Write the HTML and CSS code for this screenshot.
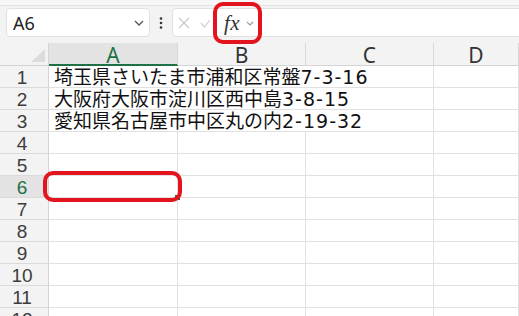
FILE: index.html
```html
<!DOCTYPE html>
<html lang="ja">
<head>
    <meta charset="UTF-8">
    <meta name="viewport" content="width=device-width, initial-scale=1.0">
    <title>Excel 住所</title>
    <link rel="stylesheet" href="styles.css">
</head>
<body>
    <div class="app">
        <div class="top-strip"></div>

        <div class="formula-bar">
            <div class="name-box">
                <span class="name-text">A6</span>
                <svg class="chevron" width="10" height="6" viewBox="0 0 10 6"><path d="M1 1 L5 5 L9 1" fill="none" stroke="#555" stroke-width="1.3"/></svg>
            </div>
            <div class="more">
                <svg width="4" height="12" viewBox="0 0 4 12"><circle cx="2" cy="1.5" r="1.3" fill="#333"/><circle cx="2" cy="6" r="1.3" fill="#333"/><circle cx="2" cy="10.5" r="1.3" fill="#333"/></svg>
            </div>
            <div class="formula-box">
                <svg class="icon" width="12" height="12" viewBox="0 0 12 12"><path d="M1 1 L11 11 M11 1 L1 11" stroke="#c8c8c8" stroke-width="1.2" fill="none"/></svg>
                <svg class="icon check" width="11" height="9" viewBox="0 0 11 9"><path d="M1 4 L4.5 8 L10 1" stroke="#cfcfcf" stroke-width="1.2" fill="none"/></svg>
                <span class="fx">fx</span>
                <svg class="chevron small" width="8" height="5" viewBox="0 0 8 5"><path d="M1 1 L4 4 L7 1" fill="none" stroke="#999" stroke-width="1.1"/></svg>
            </div>
        </div>

        <div class="sheet">
            <div class="corner">
                <svg width="14" height="13" viewBox="0 0 14 13"><polygon points="14,0 14,13 0,13" fill="#dcdcdc"/></svg>
            </div>
            <div class="col-head active">A</div>
            <div class="col-head">B</div>
            <div class="col-head">C</div>
            <div class="col-head">D</div>

            <div class="row-head">1</div>
            <div class="cell text">埼玉県さいたま市浦和区常盤<span class="num">7-3-16</span></div>
            <div class="cell"></div>

            <div class="row-head">2</div>
            <div class="cell text">大阪府大阪市淀川区西中島<span class="num">3-8-15</span></div>
            <div class="cell"></div>

            <div class="row-head">3</div>
            <div class="cell text">愛知県名古屋市中区丸の内<span class="num">2-19-32</span></div>
            <div class="cell"></div>

            <div class="row-head">4</div>
            <div class="cell"></div><div class="cell"></div><div class="cell"></div><div class="cell"></div>

            <div class="row-head">5</div>
            <div class="cell"></div><div class="cell"></div><div class="cell"></div><div class="cell"></div>

            <div class="row-head active">6</div>
            <div class="cell"><span class="fill-handle"></span></div><div class="cell"></div><div class="cell"></div><div class="cell"></div>

            <div class="row-head">7</div>
            <div class="cell"></div><div class="cell"></div><div class="cell"></div><div class="cell"></div>

            <div class="row-head">8</div>
            <div class="cell"></div><div class="cell"></div><div class="cell"></div><div class="cell"></div>

            <div class="row-head">9</div>
            <div class="cell"></div><div class="cell"></div><div class="cell"></div><div class="cell"></div>

            <div class="row-head">10</div>
            <div class="cell"></div><div class="cell"></div><div class="cell"></div><div class="cell"></div>

            <div class="row-head">11</div>
            <div class="cell"></div><div class="cell"></div><div class="cell"></div><div class="cell"></div>

            <div class="row-head">12</div>
            <div class="cell"></div><div class="cell"></div><div class="cell"></div><div class="cell"></div>
        </div>

        <div class="callout callout-fx"></div>
        <div class="callout callout-cell"></div>
    </div>
</body>
</html>
```

FILE: styles.css
```css
body {
    margin: 0;
    padding: 0;
    background-color: #fff;
    font-family: "Noto Sans", "Noto Sans CJK JP", sans-serif;
    overflow: hidden;
}

.app {
    position: relative;
    width: 519px;
    height: 316px;
    overflow: hidden;
}

.top-strip {
    height: 5px;
    background-color: #f7f7f7;
    border-bottom: 1px solid #e3e3e3;
}

.formula-bar {
    display: flex;
    align-items: center;
    height: 37px;
    padding: 2px 0 6px 6px;
    box-sizing: border-box;
    background-color: #f3f3f3;
}

.name-box {
    display: flex;
    align-items: center;
    justify-content: space-between;
    width: 144px;
    height: 29px;
    box-sizing: border-box;
    padding: 0 5px 0 6px;
    background-color: #fff;
    border: 1px solid #e1e1e1;
    border-radius: 4px;
}

.name-text {
    font-size: 18px;
    color: #222;
}

.more {
    display: flex;
    justify-content: center;
    width: 22px;
}

.formula-box {
    flex: 1;
    display: flex;
    align-items: center;
    height: 29px;
    margin-right: -8px;
    box-sizing: border-box;
    padding-left: 5px;
    background-color: #fff;
    border: 1px solid #e1e1e1;
    border-radius: 4px;
}

.formula-box .icon {
    margin-right: 10px;
}

.formula-box .icon.check {
    margin-top: 2px;
    margin-right: 13px;
}

.fx {
    font-family: "Liberation Serif", serif;
    font-style: italic;
    font-size: 21px;
    line-height: 24px;
    color: #333;
    letter-spacing: 0.5px;
}

.chevron.small {
    margin-left: 6px;
    margin-top: 2px;
}

/* sheet */
.sheet {
    display: grid;
    grid-template-columns: 49px 129px 128px 128px 1fr;
    grid-template-rows: 23px;
    grid-auto-rows: 22px;
    background-color: #fff;
}

.corner {
    display: flex;
    align-items: flex-end;
    justify-content: flex-end;
    padding: 0 3px 3px 0;
    background-color: #f3f3f3;
    border-right: 1px solid #d4d4d4;
    border-bottom: 1px solid #d4d4d4;
}

.col-head {
    box-sizing: border-box;
    background-color: #f3f3f3;
    border-right: 1px solid #d9d9d9;
    border-bottom: 1px solid #d4d4d4;
    text-align: center;
    font-size: 21px;
    line-height: 24px;
    color: #333;
}

.col-head.active {
    background-color: #e3e3e3;
    border-bottom: 2px solid #1e7145;
    color: #1e7145;
}

.row-head {
    box-sizing: border-box;
    background-color: #f3f3f3;
    border-right: 1px solid #d4d4d4;
    border-bottom: 1px solid #dadada;
    text-align: center;
    font-family: "Liberation Sans", sans-serif;
    font-size: 19px;
    line-height: 23px;
    color: #3c3c3c;
    padding-right: 4px;
}

.row-head.active {
    background-color: #e3e3e3;
    color: #1e7145;
}

.cell {
    position: relative;
    box-sizing: border-box;
    border-right: 1px solid #e1e1e1;
    border-bottom: 1px solid #e1e1e1;
}

.cell.text {
    grid-column: span 3;
    padding-left: 5px;
    white-space: nowrap;
    font-family: "DejaVu Sans", "Noto Sans CJK JP", sans-serif;
    font-size: 19px;
    line-height: 23px;
    color: #111;
}

.num {
    letter-spacing: 1px;
}

.fill-handle {
    position: absolute;
    right: -4px;
    bottom: -4px;
    width: 5px;
    height: 5px;
    background-color: #1e7145;
    border: 1px solid #fff;
}

/* red annotation boxes */
.callout {
    position: absolute;
    box-sizing: border-box;
    border: 4px solid #e3141e;
    border-radius: 10px;
}

.callout-fx {
    left: 213px;
    top: 2px;
    width: 49px;
    height: 42px;
}

.callout-cell {
    left: 43px;
    top: 171px;
    width: 139px;
    height: 31px;
}
```
